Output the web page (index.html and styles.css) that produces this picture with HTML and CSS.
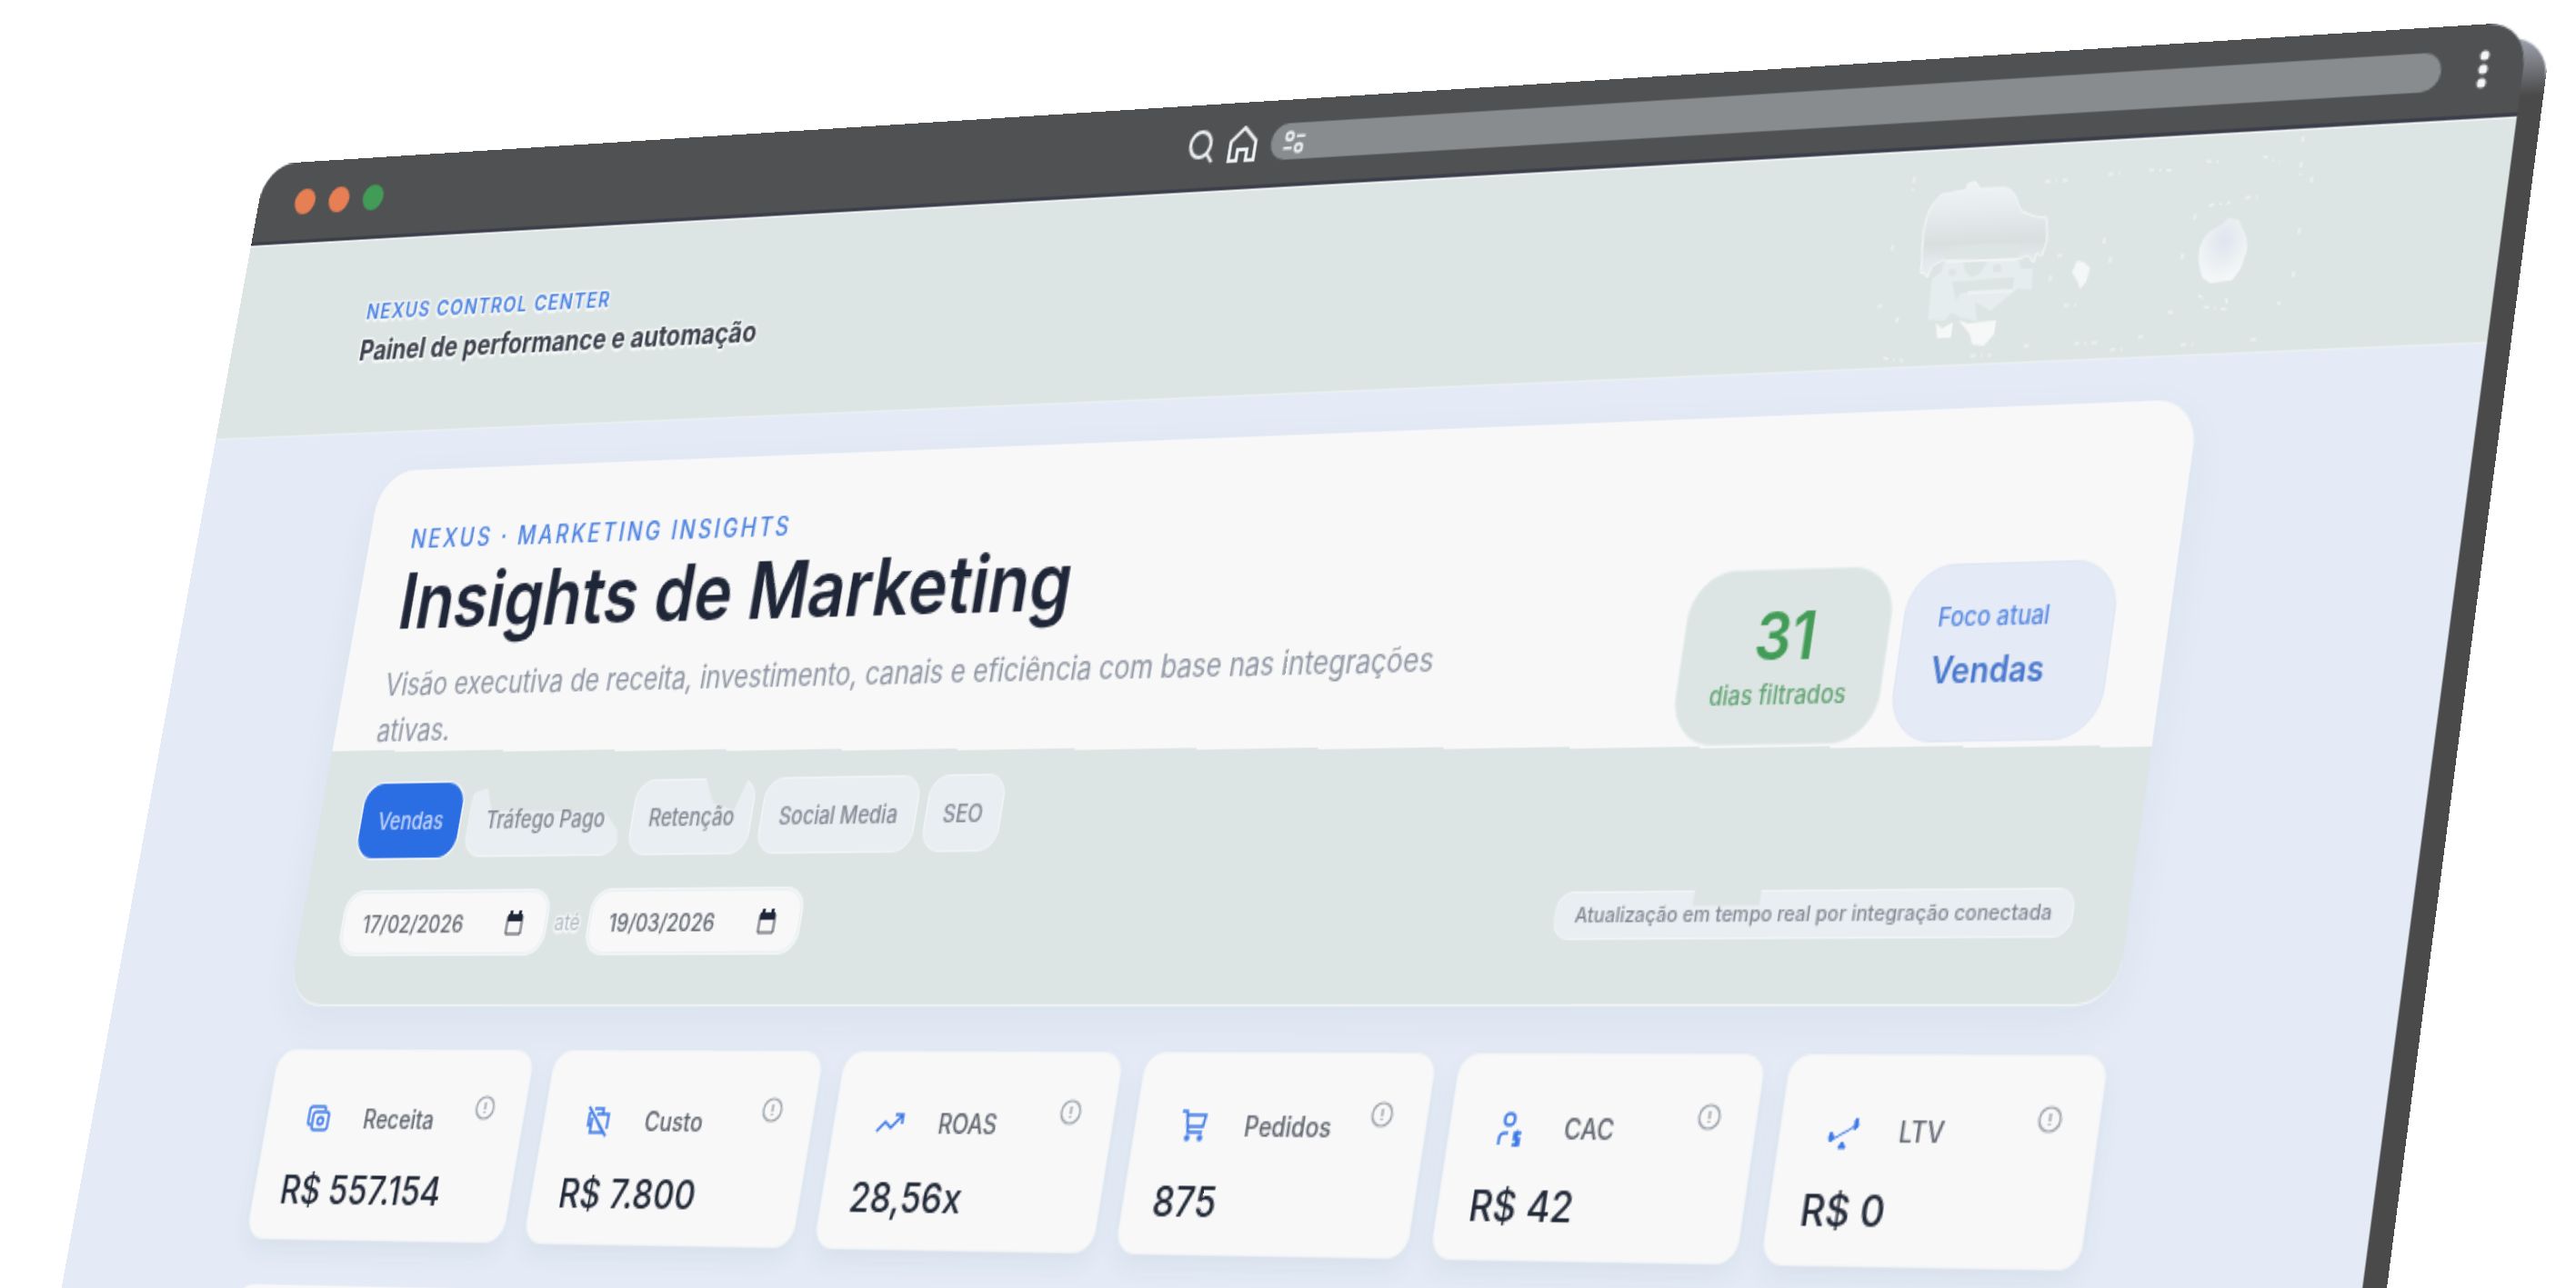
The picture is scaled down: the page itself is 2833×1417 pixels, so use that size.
FILE: index.html
```html
<!DOCTYPE html>
<html lang="pt-BR">
<head>
    <meta charset="UTF-8">
    <meta name="viewport" content="width=device-width, initial-scale=1.0">
    <title>Insights de Marketing</title>
    <link rel="stylesheet" href="styles.css">
</head>
<body>

<div class="mockup">
    <div class="edge"></div>
    <div class="window">
        <div class="chrome">
            <div class="lights">
                <span class="light"></span>
                <span class="light"></span>
                <span class="light green"></span>
            </div>
            <div class="nav-icons">
                <svg class="icon-search" viewBox="0 0 20 20"><ellipse cx="9.500" cy="9" rx="6.500" ry="7"/><path d="M14 14l4 5"/></svg>
                <svg class="icon-home" viewBox="0 0 20 20"><path d="M2 8.500L10 1l8 7.500V19h-5v-6H7v6H2z"/></svg>
            </div>
            <div class="address">
                <svg viewBox="0 0 14 12"><circle cx="4" cy="3" r="2"/><path d="M8 3h5M1 9h5"/><circle cx="10" cy="9" r="2"/></svg>
            </div>
            <svg class="kebab" viewBox="0 0 14 20"><circle cx="7" cy="3" r="2.500"/><circle cx="7" cy="10" r="2.500"/><circle cx="7" cy="17" r="2.500"/></svg>
        </div>

        <header class="topbar">
            <div class="titles">
                <p class="brand">NEXUS CONTROL CENTER</p>
                <p class="tagline">Painel de performance e automação</p>
            </div>
            <svg class="emblem" viewBox="1095 0 240 113">
                <defs>
                    <linearGradient id="cap" x1="0" y1="0" x2="0" y2="1">
                        <stop offset="0" stop-color="#eff3f5"/>
                        <stop offset="0.3" stop-color="#e6ebee"/>
                        <stop offset="0.65" stop-color="#d9dfdf"/>
                        <stop offset="0.85" stop-color="#e3e9ed"/>
                        <stop offset="1" stop-color="#e8eeee"/>
                    </linearGradient>
                    <radialGradient id="drop" cx="0.5" cy="0.35" r="0.65">
                        <stop offset="0" stop-color="#dfe4ef"/>
                        <stop offset="0.5" stop-color="#e9eef2"/>
                        <stop offset="1" stop-color="#f6f8f8"/>
                    </radialGradient>
                </defs>
                <path fill="url(#cap)" stroke="#f1f5f5" d="M1114 64L1112 43Q1112 33 1115 28L1119 23L1134 21V18L1138 17L1142 21L1156 21Q1163 23 1165 30L1168 34L1176 37L1183 38L1185 50L1183 58L1180 56L1179 61L1175 57L1170 59L1127 57L1120 60L1118 66L1115 63z"/>
                <path fill="#dce5e3" d="M1126 52l20-2l24 1l-1 7l-42 0z"/>
                <path fill="#e6edee" d="M1127 57L1170 59L1172 64L1179 64L1180 75L1172 74L1158 85L1148 80L1151 90L1142 88L1135 85L1132 89L1122 88L1121 67L1126 63z"/>
                <path fill="#dce5e3" d="M1138 59l14 0l-3 6l-5 2l-4-3zM1131 62l4 1l-1 3l-4-1zM1156 61l4 0l1 4l-5 0zM1133 69l36-1v7h-30l-2 4z"/>
                <path fill="none" stroke="#f6f8f8" d="M1128 58L1169 59M1143 75L1169 75"/>
                <path fill="#f5f8f7" d="M1127 90l4 3l6-3v8h-8zM1140 89l6 2l16-1v7l-5 6l-7-1l-2-5z"/>
                <path fill="#f4f7f7" d="M1202 67l2-6l4 1l4 3l-1 7l-3 4l-2-4z"/>
                <path fill="url(#drop)" d="M1273 58Q1274 52 1278 49L1284 46L1287 43L1293 44L1296 49Q1300 54 1300 60L1298 69L1294 75L1282 76L1277 73Q1273 66 1273 58z"/>
                <path class="specks" d="M1102 13v8M1095 48v4M1091 80h3M1104 86v3M1099 107l12 2M1179 19h16M1215 17h10M1238 16l16 1M1270 13l10 1M1302 12l10 4M1323 3v5M1324 16v10M1331 24v3M1328 50v6M1328 72v6M1321 88h2M1309 106h4M1280 88l14 2M1276 82l4 2M1292 84l2 6M1260 90h6M1180 104h5M1209 104h16M1245 102h5M1275 36l12-1M1295 33h10M1268 40v6M1264 60v5M1218 50v4M1223 60v5M1192 58h5M1190 68v5M1200 84h8M1150 108h12M1230 108h8M1270 107h8"/>
            </svg>
        </header>

        <main class="content">
            <section class="hero">
                <div class="hero-top">
                    <div class="hero-copy">
                        <p class="eyebrow">NEXUS · MARKETING INSIGHTS</p>
                        <h1>Insights de Marketing</h1>
                        <p class="lead">Visão executiva de receita, investimento, canais e eficiência com base nas integrações ativas.</p>
                    </div>
                    <div class="stats">
                        <div class="stat stat-days">
                            <strong>31</strong>
                            <span>dias filtrados</span>
                        </div>
                        <div class="stat stat-focus">
                            <span>Foco atual</span>
                            <strong>Vendas</strong>
                        </div>
                    </div>
                </div>

                <div class="tabs">
                    <button class="tab active">Vendas</button>
                    <button class="tab tab-ads">Tráfego Pago</button>
                    <button class="tab tab-retention">Retenção</button>
                    <button class="tab">Social Media</button>
                    <button class="tab">SEO</button>
                </div>

                <div class="filters">
                    <div class="dates">
                        <div class="date">
                            <input type="text" value="17/02/2026" aria-label="Data inicial">
                            <svg viewBox="0 0 12 14"><path d="M1 3h10v10H1z"/><path class="solid" d="M1 2h10v4H1zM2 0h2v3H2zM8 0h2v3H8z"/></svg>
                        </div>
                        <span class="until">até</span>
                        <div class="date">
                            <input type="text" value="19/03/2026" aria-label="Data final">
                            <svg viewBox="0 0 12 14"><path d="M1 3h10v10H1z"/><path class="solid" d="M1 2h10v4H1zM2 0h2v3H2zM8 0h2v3H8z"/></svg>
                        </div>
                    </div>
                    <p class="sync">Atualização em tempo real por integração conectada</p>
                </div>
            </section>

            <section class="kpis">
                <article class="kpi">
                    <div class="kpi-head">
                        <svg class="kpi-icon" viewBox="0 0 18 18"><path d="M4 12H3a1 1 0 0 1-1-1V4a2 2 0 0 1 2-2h8a1 1 0 0 1 1 1v1"/><rect x="5" y="5" width="11" height="10" rx="2"/><circle cx="10.500" cy="10" r="2"/></svg>
                        <h2>Receita</h2>
                        <svg class="info" viewBox="0 0 14 14"><circle cx="7" cy="7" r="6"/><path d="M7 4v4M7 9v1"/></svg>
                    </div>
                    <p class="value">R$ 557.154</p>
                </article>
                <article class="kpi">
                    <div class="kpi-head">
                        <svg class="kpi-icon" viewBox="0 0 18 18"><path d="M6 2h6v3M3 4v7h2M5 7v8h9M8 5h8v8M2 1l14 16M9 9l3 4"/></svg>
                        <h2>Custo</h2>
                        <svg class="info" viewBox="0 0 14 14"><circle cx="7" cy="7" r="6"/><path d="M7 4v4M7 9v1"/></svg>
                    </div>
                    <p class="value">R$ 7.800</p>
                </article>
                <article class="kpi">
                    <div class="kpi-head">
                        <svg class="kpi-icon" viewBox="0 0 18 18"><path d="M1 13l5-5 4 3 7-7M12 4h5v5"/></svg>
                        <h2>ROAS</h2>
                        <svg class="info" viewBox="0 0 14 14"><circle cx="7" cy="7" r="6"/><path d="M7 4v4M7 9v1"/></svg>
                    </div>
                    <p class="value">28,56x</p>
                </article>
                <article class="kpi">
                    <div class="kpi-head">
                        <svg class="kpi-icon" viewBox="0 0 18 18"><path d="M1 1h3l2 11h9M4 3h12l-1 6H5"/><circle cx="6" cy="15" r="1"/><circle cx="14" cy="15" r="1"/></svg>
                        <h2>Pedidos</h2>
                        <svg class="info" viewBox="0 0 14 14"><circle cx="7" cy="7" r="6"/><path d="M7 4v4M7 9v1"/></svg>
                    </div>
                    <p class="value">875</p>
                </article>
                <article class="kpi">
                    <div class="kpi-head">
                        <svg class="kpi-icon" viewBox="0 0 18 18"><circle cx="8" cy="4" r="3"/><path d="M3 17v-3a3 3 0 0 1 3-3h2M16 11h-4v3h3v3h-4M13.500 9.500v9"/></svg>
                        <h2>CAC</h2>
                        <svg class="info" viewBox="0 0 14 14"><circle cx="7" cy="7" r="6"/><path d="M7 4v4M7 9v1"/></svg>
                    </div>
                    <p class="value">R$ 42</p>
                </article>
                <article class="kpi">
                    <div class="kpi-head">
                        <svg class="kpi-icon kpi-icon-thin" viewBox="0 0 18 18"><path d="M3 13l5-3 4-2 4-3"/><path class="solid" d="M2 9l2 3-2 2-1-2zM15 3l1-1 1 4-2 2zM9 14l2 3H7z"/></svg>
                        <h2>LTV</h2>
                        <svg class="info" viewBox="0 0 14 14"><circle cx="7" cy="7" r="6"/><path d="M7 4v4M7 9v1"/></svg>
                    </div>
                    <p class="value">R$ 0</p>
                </article>
            </section>

            <section class="panel"></section>
        </main>
    </div>
</div>

</body>
</html>
```
FILE: styles.css
```css
* {
    box-sizing: border-box;
}
html, body {
    height: 100%;
    overflow: hidden;
}
body {
    margin: 0;
    background: #fff;
    font-family: Inter, "Open Sans", sans-serif;
}
h1, h2, p {
    margin: 0;
}
svg {
    display: block;
    flex: none;
    fill: none;
}

/* browser window seen in perspective */
.mockup {
    position: relative;
    width: 1440px;
    transform-origin: 0 0;
    transform: matrix3d(
        1.450764, -0.111896, 0, -0.0001010833,
        -0.350136, 1.859318, 0, -0.00003775,
        0, 0, 1, 0,
        292.807, 181.253, 0, 1.001812
    );
}
.edge {
    position: absolute;
    inset: 8px -13px -8px 13px;
    border-radius: 22px;
    background: linear-gradient(#a0a4b0, #4a4a4a 30px);
}
.window {
    position: relative;
    overflow: hidden;
    border-radius: 22px;
    background: #e4ebf6;
}

/* title bar */
.chrome {
    display: grid;
    grid-template-columns: 618px auto 1fr auto;
    align-items: center;
    height: 48px;
    padding: 0 15px 0 27px;
    background: #4f5152;
    border-bottom: 2px solid #3c3e4a;
}
.lights {
    display: flex;
    gap: 10px;
}
.light {
    width: 15px;
    height: 15px;
    border-radius: 50%;
    background: #e67f54;
}
.light.green {
    background: #429b57;
}
.nav-icons {
    display: flex;
    align-items: center;
    gap: 7px;
    stroke: #eef2f5;
    stroke-width: 2;
}
.nav-icons svg {
    width: 20px;
    height: 20px;
}
.address {
    height: 20px;
    margin: 0 16px 0 8px;
    padding: 4px 7px;
    border-radius: 10px;
    background: #888c8e;
}
.address svg {
    width: 16px;
    height: 13px;
    stroke: #eef2f5;
    stroke-width: 1.5;
}
.kebab {
    width: 14px;
    height: 20px;
    fill: #f4f6f8;
}

/* page header */
.topbar {
    display: flex;
    justify-content: space-between;
    align-items: flex-start;
    height: 114px;
    padding: 0 105px 0 95px;
    background: #dce5e3;
    border-top: 1px solid #f2f6f6;
    border-bottom: 1px solid #eaf0f1;
}
.titles {
    padding-top: 32px;
}
.brand, .tagline, .until {
    text-shadow: 1px 1px 1px #f6f8f8, -1px -1px 1px #f6f8f8, 1px -1px 1px #f6f8f8, -1px 1px 1px #f6f8f8, 0 2px 1px #f6f8f8;
}
.brand {
    font-size: 12px;
    line-height: 20px;
    font-weight: 600;
    letter-spacing: 1px;
    color: #4a80e0;
}
.tagline {
    font-size: 16px;
    line-height: 24px;
    font-weight: 700;
    color: #3c414c;
}
.emblem {
    width: 240px;
    height: 113px;
    overflow: visible;
}
.specks {
    stroke: #f2f6f6;
    stroke-width: 1;
    stroke-dasharray: 3 3 1 3;
}

.content {
    padding: 22px 155px 0 127px;
}

/* hero card */
.hero {
    height: 304px;
    padding: 30px 31px 0 30px;
    border-radius: 24px;
    background: linear-gradient(180.740deg, #f8f8f8 55%, #dce5e3 55%);
    border-bottom: 1px solid #f2f6f6;
    box-shadow: 0 8px 24px rgba(40, 50, 90, 0.05);
}
.hero-top {
    display: flex;
    justify-content: space-between;
    align-items: flex-end;
    height: 141px;
}
.hero-copy {
    align-self: flex-start;
    width: 720px;
}
.eyebrow {
    font-size: 14px;
    line-height: 20px;
    font-weight: 500;
    letter-spacing: 2px;
    color: #4a80e0;
}
h1 {
    font-size: 44px;
    line-height: 50px;
    font-weight: 600;
    color: #1f2637;
}
.lead {
    margin-top: 10px;
    font-size: 17px;
    line-height: 26px;
    color: #8e95a3;
}
.stats {
    display: flex;
    gap: 7px;
}
.stat {
    display: flex;
    flex-direction: column;
    width: 121px;
    height: 91px;
    border-radius: 26px;
}
.stat-days {
    align-items: center;
    padding-top: 14px;
    background: #dce5e3;
    border: 1px solid #e6eded;
    color: #429b57;
}
.stat-days strong {
    font-size: 34px;
    line-height: 40px;
    font-weight: 600;
}
.stat-days span {
    font-size: 13px;
    line-height: 20px;
    font-weight: 500;
    color: #67a578;
}
.stat-focus {
    padding: 16px 19px;
    background: #e5ebf6;
    border: 1px solid #e0e7f3;
    color: #4a78cc;
}
.stat-focus span {
    font-size: 13px;
    line-height: 20px;
    font-weight: 500;
    color: #5a8ae2;
}
.stat-focus strong {
    margin-top: 4px;
    font-size: 18px;
    line-height: 28px;
    font-weight: 600;
}

/* tabs */
.tabs {
    display: flex;
    gap: 6px;
    margin-top: 8px;
}
.tab {
    position: relative;
    z-index: 0;
    height: 42px;
    padding: 0 12px;
    border: 0;
    background: none;
    font-family: inherit;
    font-size: 13px;
    font-weight: 500;
    color: #838893;
}
.tab::before {
    content: "";
    position: absolute;
    z-index: -1;
    inset: 0;
    border-radius: 12px;
    background: #e8eef1;
    border: 1px solid #f1f5f6;
}
.tab.active {
    color: #c3d5f8;
}
.tab.active::before {
    background: #2b6de2;
    border-color: #2b6de2;
    box-shadow: 0 0 0 1px #f4f7fa;
}
.tab-ads::before {
    clip-path: polygon(0 15%, 9% 8%, 14% 38%, 88% 42%, 98% 66%, 100% 100%, 0 100%);
}
.tab-retention::before {
    clip-path: polygon(0 0, 57% 0, 66% 32%, 84% 42%, 92% 0, 100% 5%, 100% 100%, 0 100%);
}

/* date filters */
.filters {
    display: flex;
    justify-content: space-between;
    align-items: center;
    margin-top: 19px;
}
.dates {
    display: flex;
    align-items: center;
    gap: 6px;
}
.date {
    display: flex;
    align-items: center;
    width: 143px;
    height: 35px;
    padding: 0 15px 0 13px;
    border: 1px solid #eaf0f3;
    border-radius: 12px;
    background: #f8f8f8;
    box-shadow: 0 0 0 1px #f4f7f7;
}
.date input {
    flex: 1;
    min-width: 0;
    padding: 0;
    border: 0;
    background: none;
    font-family: inherit;
    font-size: 13px;
    font-weight: 500;
    color: #646973;
}
.date svg {
    width: 12px;
    height: 14px;
    stroke: #3c414c;
}
.date .solid {
    fill: #1f2637;
    stroke: none;
}
.until {
    font-size: 12px;
    color: #b3b9c2;
}
.sync {
    position: relative;
    z-index: 0;
    padding: 0 12px;
    font-size: 11px;
    line-height: 25px;
    font-weight: 500;
    color: #838893;
}
.sync::before {
    content: "";
    position: absolute;
    z-index: -1;
    inset: 0;
    border: 1px solid #f1f5f6;
    border-radius: 10px;
    background: #e8eef1;
    clip-path: polygon(0 0, 27% 0, 27% 31%, 40% 31%, 40% 0, 100% 0, 100% 100%, 0 100%);
}

/* kpi cards */
.kpis {
    display: grid;
    grid-template-columns: repeat(6, 1fr);
    gap: 14px;
    margin-top: 24px;
}
.kpi {
    height: 106px;
    padding: 24px 20px 0 18px;
    border: 1px solid #f1f4f5;
    border-radius: 12px;
    background: #f8f8f8;
    box-shadow: 0 6px 14px rgba(40, 60, 90, 0.06);
}
.kpi-head {
    display: flex;
    align-items: center;
    height: 28px;
}
.kpi-icon {
    width: 18px;
    height: 18px;
    margin: 0 23px 0 9px;
    stroke: #3b78e6;
    stroke-width: 1.5;
}
.kpi-icon-thin {
    stroke-width: 1;
}
.kpi-icon .solid {
    fill: #3b78e6;
}
.kpi h2 {
    font-size: 14px;
    line-height: 20px;
    font-weight: 500;
    color: #5f646e;
}
.info {
    align-self: flex-start;
    width: 14px;
    height: 14px;
    margin-left: auto;
    stroke: #9aa1aa;
    stroke-width: 1.2;
}
.value {
    margin-top: 11px;
    font-size: 22px;
    line-height: 28px;
    font-weight: 500;
    color: #232a38;
}

.panel {
    height: 160px;
    margin-top: 25px;
    border-radius: 12px;
    background: #f8f8f8;
}
```
